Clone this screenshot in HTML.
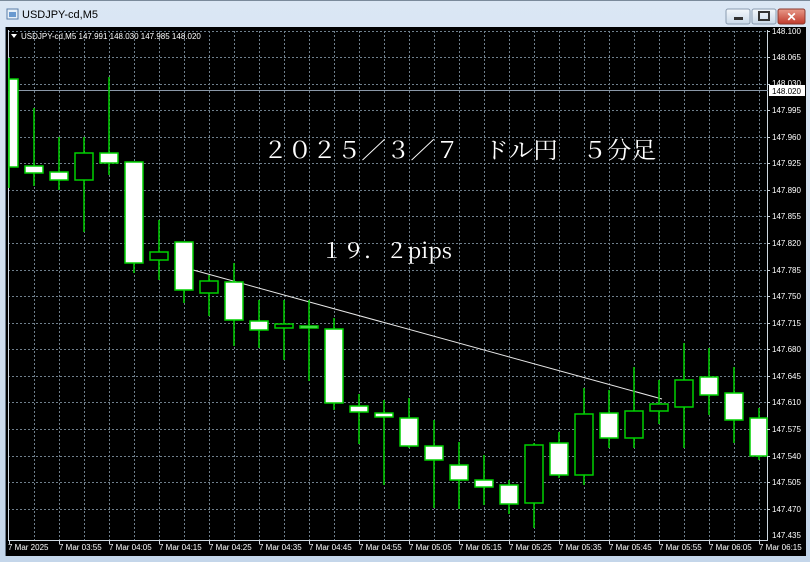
<!DOCTYPE html>
<html><head><meta charset="utf-8"><style>
html,body{margin:0;padding:0;width:810px;height:562px;overflow:hidden;background:#cfdcea}
svg{display:block}
</style></head><body>
<svg width="810" height="562" xmlns="http://www.w3.org/2000/svg" font-family="Liberation Sans, sans-serif">
<defs>
<linearGradient id="tb" x1="0" y1="0" x2="0" y2="1"><stop offset="0" stop-color="#dbe7f4"/><stop offset="1" stop-color="#c4d6ea"/></linearGradient>
<linearGradient id="rb" x1="0" y1="0" x2="0" y2="1"><stop offset="0" stop-color="#e89a8a"/><stop offset="1" stop-color="#c0392b"/></linearGradient>
<linearGradient id="gb" x1="0" y1="0" x2="0" y2="1"><stop offset="0" stop-color="#f4f8fc"/><stop offset="1" stop-color="#c9d8e8"/></linearGradient>
</defs>
<rect x="0" y="0" width="810" height="562" fill="url(#tb)"/>
<rect x="0" y="0" width="810" height="1" fill="#7a8a9a"/>
<!-- title icon -->
<rect x="7" y="9" width="11" height="10" fill="#e8f0f8" stroke="#5a7ea8"/>
<rect x="9" y="12" width="7" height="5" fill="#6a9ad0"/>
<text x="22" y="18" font-size="11" fill="#000">USDJPY-cd,M5</text>
<!-- buttons -->
<rect x="726" y="9" width="24" height="15" rx="2" fill="url(#gb)" stroke="#8a9cb0"/>
<rect x="734" y="17" width="9" height="3" fill="#333"/>
<rect x="752" y="9" width="24" height="15" rx="2" fill="url(#gb)" stroke="#8a9cb0"/>
<rect x="759" y="12" width="10" height="8" fill="none" stroke="#333" stroke-width="2"/>
<rect x="778" y="9" width="27" height="15" rx="2" fill="url(#rb)" stroke="#8a3a30"/>
<text x="791.5" y="21" font-size="12" font-weight="bold" fill="#fff" text-anchor="middle">✕</text>
<!-- chart bg -->
<rect x="6" y="27" width="800" height="529" fill="#000"/>
<rect x="5" y="27" width="1" height="529" fill="#6a7a8a"/>
<!-- grid -->
<g stroke="#6f7f8c" stroke-width="1" stroke-dasharray="2,2" fill="none">
<path id="hg" d="M8 31.5H767M8 57.5H767M8 84.5H767M8 110.5H767M8 137.5H767M8 163.5H767M8 190.5H767M8 216.5H767M8 243.5H767M8 270.5H767M8 296.5H767M8 323.5H767M8 349.5H767M8 376.5H767M8 402.5H767M8 429.5H767M8 456.5H767M8 482.5H767M8 509.5H767"/>
<path d="M34.5 31V540M59.5 31V540M84.5 31V540M109.5 31V540M134.5 31V540M159.5 31V540M184.5 31V540M209.5 31V540M234.5 31V540M259.5 31V540M284.5 31V540M309.5 31V540M334.5 31V540M359.5 31V540M384.5 31V540M409.5 31V540M434.5 31V540M459.5 31V540M484.5 31V540M509.5 31V540M534.5 31V540M559.5 31V540M584.5 31V540M609.5 31V540M634.5 31V540M659.5 31V540M684.5 31V540M709.5 31V540M734.5 31V540M759.5 31V540"/>
</g>
<!-- axes -->
<rect x="8" y="30" width="1" height="511" fill="#cfd8e0"/>
<rect x="767" y="30" width="1" height="511" fill="#cfd8e0"/>
<rect x="8" y="540" width="760" height="1" fill="#cfd8e0"/>
<!-- current price line -->
<rect x="8" y="90" width="760" height="1" fill="#8a98a8"/>
<!-- trend line -->
<line x1="186" y1="268" x2="662" y2="399" stroke="#e8e8e8" stroke-width="1"/>
<!-- candles -->
<g stroke="#00d000" stroke-width="1.5">
<line x1="9" y1="58" x2="9" y2="188"/>
<line x1="34" y1="108" x2="34" y2="186"/>
<line x1="59" y1="137" x2="59" y2="190"/>
<line x1="84" y1="137" x2="84" y2="232"/>
<line x1="109" y1="77" x2="109" y2="175"/>
<line x1="134" y1="162" x2="134" y2="273"/>
<line x1="159" y1="220" x2="159" y2="280"/>
<line x1="184" y1="242" x2="184" y2="303"/>
<line x1="209" y1="275" x2="209" y2="316"/>
<line x1="234" y1="263" x2="234" y2="346"/>
<line x1="259" y1="300" x2="259" y2="348"/>
<line x1="284" y1="300" x2="284" y2="360"/>
<line x1="309" y1="300" x2="309" y2="381"/>
<line x1="334" y1="318" x2="334" y2="410"/>
<line x1="359" y1="394" x2="359" y2="444"/>
<line x1="384" y1="400" x2="384" y2="485"/>
<line x1="409" y1="398" x2="409" y2="448"/>
<line x1="434" y1="420" x2="434" y2="508"/>
<line x1="459" y1="442" x2="459" y2="509"/>
<line x1="484" y1="455" x2="484" y2="505"/>
<line x1="509" y1="480" x2="509" y2="514"/>
<line x1="534" y1="443" x2="534" y2="528"/>
<line x1="559" y1="432" x2="559" y2="478"/>
<line x1="584" y1="388" x2="584" y2="485"/>
<line x1="609" y1="390" x2="609" y2="448"/>
<line x1="634" y1="367" x2="634" y2="448"/>
<line x1="659" y1="380" x2="659" y2="424"/>
<line x1="684" y1="343" x2="684" y2="448"/>
<line x1="709" y1="348" x2="709" y2="415"/>
<line x1="734" y1="367" x2="734" y2="443"/>
<line x1="759" y1="408" x2="759" y2="460"/>
</g>
<g stroke="#00d000" stroke-width="1.5" fill="#fff">
<rect x="9" y="79" width="9" height="88"/>
<rect x="25" y="166" width="18" height="7"/>
<rect x="50" y="172" width="18" height="8"/>
<rect x="84" y="153" width="18" height="10" transform="translate(16,0)"/>
<rect x="125" y="162" width="18" height="101"/>
<rect x="175" y="242" width="18" height="48"/>
<rect x="225" y="282" width="18" height="38"/>
<rect x="250" y="321" width="18" height="9"/>
<rect x="300" y="326" width="18" height="2"/>
<rect x="325" y="329" width="18" height="74"/>
<rect x="350" y="406" width="18" height="6"/>
<rect x="375" y="413" width="18" height="4"/>
<rect x="400" y="418" width="18" height="28"/>
<rect x="425" y="446" width="18" height="14"/>
<rect x="450" y="465" width="18" height="15"/>
<rect x="475" y="480" width="18" height="7"/>
<rect x="500" y="485" width="18" height="19"/>
<rect x="550" y="443" width="18" height="32"/>
<rect x="600" y="413" width="18" height="25"/>
<rect x="700" y="377" width="18" height="18"/>
<rect x="725" y="393" width="18" height="27"/>
<rect x="750" y="418" width="17" height="38"/>
</g>
<g stroke="#00d000" stroke-width="1.5" fill="#000">
<rect x="75" y="153" width="18" height="27"/>
<rect x="150" y="252" width="18" height="8"/>
<rect x="200" y="281" width="18" height="12"/>
<rect x="275" y="324" width="18" height="4"/>
<rect x="525" y="445" width="18" height="58"/>
<rect x="575" y="414" width="18" height="61"/>
<rect x="625" y="411" width="18" height="27"/>
<rect x="650" y="404" width="18" height="7"/>
<rect x="675" y="380" width="18" height="27"/>
</g>
<!-- header info -->
<path d="M11 34h6l-3 4z" fill="#fff"/>
<text x="21" y="39" font-size="8" fill="#fff">USDJPY-cd,M5  147.991 148.030 147.985 148.020</text>
<!-- price labels -->
<g font-size="8" fill="#fff">
<g stroke="#cfd8e0"><path d="M767 31.5h3M767 57.5h3M767 84.5h3M767 110.5h3M767 137.5h3M767 163.5h3M767 190.5h3M767 216.5h3M767 243.5h3M767 270.5h3M767 296.5h3M767 323.5h3M767 349.5h3M767 376.5h3M767 402.5h3M767 429.5h3M767 456.5h3M767 482.5h3M767 509.5h3"/></g>
<text x="772" y="34">148.100</text>
<text x="772" y="60">148.065</text>
<text x="772" y="86">148.030</text>
<text x="772" y="113">147.995</text>
<text x="772" y="140">147.960</text>
<text x="772" y="166">147.925</text>
<text x="772" y="193">147.890</text>
<text x="772" y="219">147.855</text>
<text x="772" y="246">147.820</text>
<text x="772" y="273">147.785</text>
<text x="772" y="299">147.750</text>
<text x="772" y="326">147.715</text>
<text x="772" y="352">147.680</text>
<text x="772" y="379">147.645</text>
<text x="772" y="405">147.610</text>
<text x="772" y="432">147.575</text>
<text x="772" y="459">147.540</text>
<text x="772" y="485">147.505</text>
<text x="772" y="512">147.470</text>
<text x="772" y="538">147.435</text>
</g>
<rect x="769" y="85" width="36" height="11" fill="#fff"/>
<text x="772" y="94" font-size="8" fill="#000">148.020</text>
<!-- time labels -->
<g font-size="8" fill="#fff">
<g stroke="#cfd8e0"><path d="M9.5 541v3M59.5 541v3M109.5 541v3M159.5 541v3M209.5 541v3M259.5 541v3M309.5 541v3M359.5 541v3M409.5 541v3M459.5 541v3M509.5 541v3M559.5 541v3M609.5 541v3M659.5 541v3M709.5 541v3M759.5 541v3"/></g>
<text x="8" y="550">7 Mar 2025</text>
<text x="59" y="550">7 Mar 03:55</text>
<text x="109" y="550">7 Mar 04:05</text>
<text x="159" y="550">7 Mar 04:15</text>
<text x="209" y="550">7 Mar 04:25</text>
<text x="259" y="550">7 Mar 04:35</text>
<text x="309" y="550">7 Mar 04:45</text>
<text x="359" y="550">7 Mar 04:55</text>
<text x="409" y="550">7 Mar 05:05</text>
<text x="459" y="550">7 Mar 05:15</text>
<text x="509" y="550">7 Mar 05:25</text>
<text x="559" y="550">7 Mar 05:35</text>
<text x="609" y="550">7 Mar 05:45</text>
<text x="659" y="550">7 Mar 05:55</text>
<text x="709" y="550">7 Mar 06:05</text>
<text x="759" y="550">7 Mar 06:15</text>
</g>
<!-- annotations -->
<text x="263" y="158" font-size="23" fill="#fff" font-family="Noto Serif CJK SC, Liberation Serif, serif" textLength="393" lengthAdjust="spacingAndGlyphs">２０２５／３／７　ドル円　５分足</text>
<text x="321" y="258" font-size="21" fill="#fff" font-family="Noto Serif CJK SC, Liberation Serif, serif" textLength="131" lengthAdjust="spacingAndGlyphs">１９．２pips</text>
</svg>
</body></html>
